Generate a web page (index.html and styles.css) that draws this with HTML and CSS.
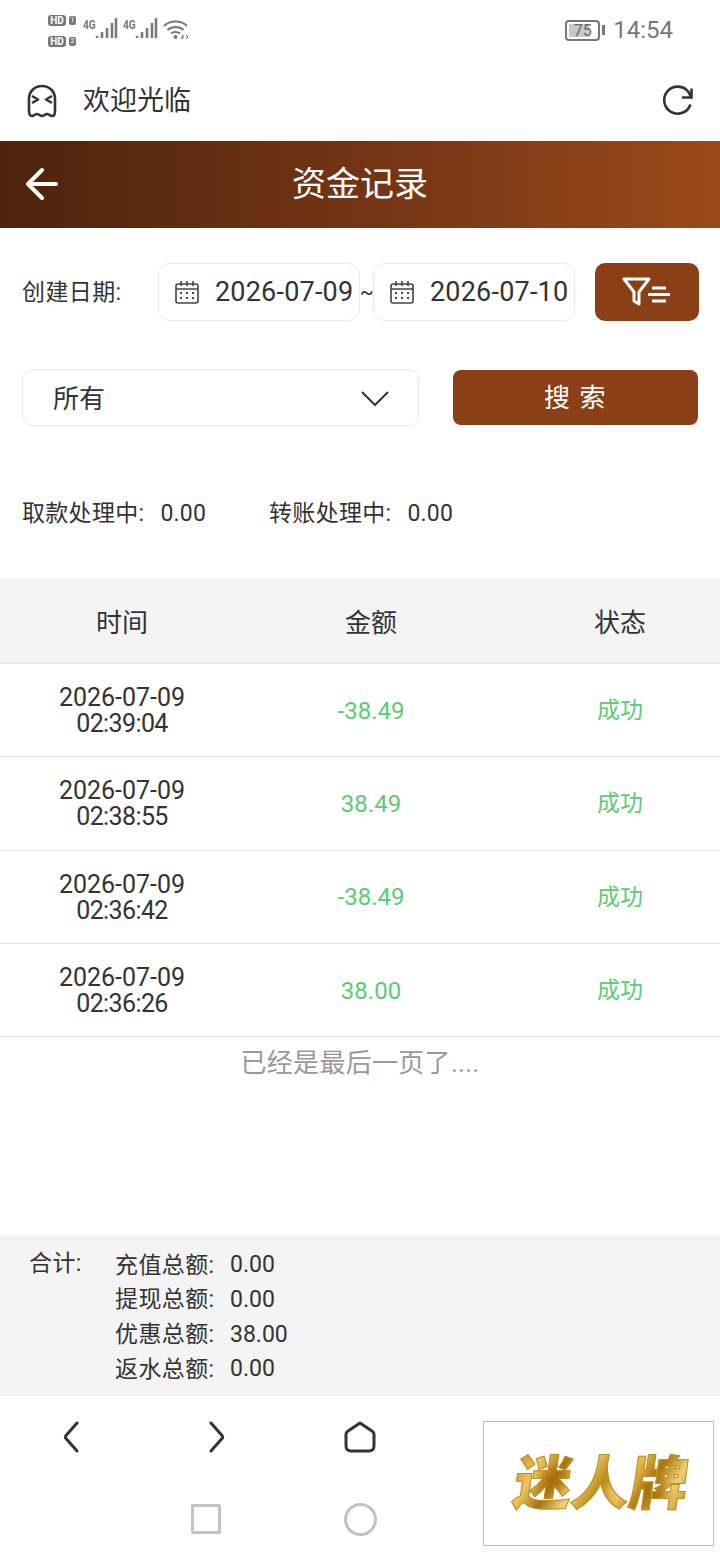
FILE: index.html
```html
<!DOCTYPE html>
<html lang="zh-CN">
<head>
<meta charset="UTF-8">
<meta name="viewport" content="width=device-width, initial-scale=1.0">
<title>资金记录</title>
<link rel="stylesheet" href="styles.css">
</head>
<body>

<div class="status-bar">
    <div class="sims">
        <div class="sim"><span class="hd">HD</span><span class="sim-no">1</span></div>
        <div class="sim"><span class="hd">HD</span><span class="sim-no">2</span></div>
    </div>
    <div class="signal">
        <span class="net">4G</span>
        <svg width="24" height="22" viewBox="0 0 24 22"><path d="M3 19v2M8 15v6M13 11v10M18 6v15M22 1v20" class="bars"/></svg>
    </div>
    <div class="signal">
        <span class="net">4G</span>
        <svg width="24" height="22" viewBox="0 0 24 22"><path d="M3 19v2M8 15v6M13 11v10M18 6v15M22 1v20" class="bars"/></svg>
    </div>
    <svg class="wifi" width="26" height="24" viewBox="0 0 26 24">
        <path d="M1 8C7 2 18 2 24 8M4.500 12C9 8 16 8 20.500 12M8 15.500C10.500 13.500 14.500 13.500 17 15.500"/>
        <circle cx="12.500" cy="19" r="2"/>
        <path class="wifi-arrows" d="M18 21l2-4v4M23 17l2 2-2 2"/>
    </svg>
    <div class="status-right">
        <div class="battery"><span class="battery-level"></span><span class="battery-num">75</span></div>
        <span class="battery-cap"></span>
        <span class="clock">14:54</span>
    </div>
</div>

<div class="top-bar">
    <svg class="ghost" width="32" height="34" viewBox="0 0 32 34">
        <path d="M3 15C3 7 9 2 16 2s13 5 13 13v12c0 3-1 5-3 5-2 0-3-2-5-2s-3 2-5 2-3-2-5-2-3 2-5 2c-2 0-3-2-3-5z"/>
        <path d="M6 12l6 3.500-6 3.500M26 12l-6 3.500 6 3.500"/>
    </svg>
    <span class="welcome">欢迎光临</span>
    <svg class="refresh" width="32" height="32" viewBox="0 0 32 32">
        <path d="M28.500 19.500A13.500 13.500 0 1 1 26.500 7L29 12"/>
        <path d="M29.500 3.500V12.500H20"/>
    </svg>
</div>

<div class="page-head">
    <svg class="back" width="34" height="34" viewBox="0 0 34 34">
        <path d="M31 17H4M17 3L3 17l14 14"/>
    </svg>
    <h1>资金记录</h1>
</div>

<div class="filter-row">
    <span class="filter-label">创建日期:</span>
    <div class="date-box">
        <svg class="cal" width="24" height="24" viewBox="0 0 24 24">
            <rect x="1" y="4" width="22" height="19" rx="2"/>
            <path d="M1 9h22M6 1v5M12 1v5M18 1v5"/>
            <path class="cal-dots" d="M5 13h2M11 13h2M17 13h2M5 18h2M11 18h2M17 18h2"/>
        </svg>
        <span>2026-07-09</span>
    </div>
    <span class="tilde">~</span>
    <div class="date-box">
        <svg class="cal" width="24" height="24" viewBox="0 0 24 24">
            <rect x="1" y="4" width="22" height="19" rx="2"/>
            <path d="M1 9h22M6 1v5M12 1v5M18 1v5"/>
            <path class="cal-dots" d="M5 13h2M11 13h2M17 13h2M5 18h2M11 18h2M17 18h2"/>
        </svg>
        <span>2026-07-10</span>
    </div>
    <div class="filter-btn">
        <svg width="50" height="30" viewBox="0 0 50 30">
            <path class="funnel" d="M2 2h25L17 15v12l-5-3V15z"/>
            <path class="funnel-lines" d="M30 11h14M26 17.500h22M30 24h14"/>
        </svg>
    </div>
</div>

<div class="search-row">
    <div class="select-box">
        <span class="select-text">所有</span>
        <svg width="30" height="18" viewBox="0 0 30 18"><path d="M2 3l13 13L28 3"/></svg>
    </div>
    <div class="search-btn">搜 索</div>
</div>

<div class="pending">
    <span class="pending-item">取款处理中:<b>0.00</b></span>
    <span class="pending-item">转账处理中:<b>0.00</b></span>
</div>

<div class="record-head record-grid">
    <div>时间</div>
    <div>金额</div>
    <div class="col-state">状态</div>
</div>
<div class="record record-grid">
    <div class="rec-time">2026-07-09<br><span class="rec-clock">02:39:04</span></div>
    <div class="rec-green rec-amount">-38.49</div>
    <div class="rec-green rec-state col-state">成功</div>
</div>
<div class="record record-grid">
    <div class="rec-time">2026-07-09<br><span class="rec-clock">02:38:55</span></div>
    <div class="rec-green rec-amount">38.49</div>
    <div class="rec-green rec-state col-state">成功</div>
</div>
<div class="record record-grid">
    <div class="rec-time">2026-07-09<br><span class="rec-clock">02:36:42</span></div>
    <div class="rec-green rec-amount">-38.49</div>
    <div class="rec-green rec-state col-state">成功</div>
</div>
<div class="record record-grid">
    <div class="rec-time">2026-07-09<br><span class="rec-clock">02:36:26</span></div>
    <div class="rec-green rec-amount">38.00</div>
    <div class="rec-green rec-state col-state">成功</div>
</div>
<div class="last-page">已经是最后一页了....</div>

<div class="totals">
    <div class="totals-title">合计:</div>
    <div class="totals-list">
        <div class="total-line"><span>充值总额:</span><span>0.00</span></div>
        <div class="total-line"><span>提现总额:</span><span>0.00</span></div>
        <div class="total-line"><span>优惠总额:</span><span>38.00</span></div>
        <div class="total-line"><span>返水总额:</span><span>0.00</span></div>
    </div>
</div>

<div class="nav">
    <svg class="nav-icon" width="20" height="32" viewBox="0 0 20 32"><path d="M15 2L4 14.500a2 2 0 0 0 0 3L15 30"/></svg>
    <svg class="nav-icon" width="20" height="32" viewBox="0 0 20 32"><path d="M5 2l11 12.500a2 2 0 0 1 0 3L5 30"/></svg>
    <svg class="nav-icon" width="32" height="32" viewBox="0 0 32 32"><path d="M16 2L4 10c-1 .7-2 2-2 3.500V25c0 3 2 5 5 5h18c3 0 5-2 5-5V13.500c0-1.500-1-2.800-2-3.500z"/></svg>
    <span class="nav-spacer"></span>
    <span class="nav-square"></span>
    <span class="nav-circle"></span>
</div>

<div class="brand"><span class="brand-text">迷人牌</span></div>

</body>
</html>
```

FILE: styles.css
```css
* {
    box-sizing: border-box;
}
body {
    margin: 0;
    width: 720px;
    height: 1560px;
    position: relative;
    overflow: hidden;
    background-color: #fff;
    color: #333;
    font-family: Roboto, "Noto Sans CJK SC", sans-serif;
}

/* status bar */
.status-bar {
    height: 60px;
    display: flex;
    align-items: center;
    padding: 0 47px 0 48px;
}
.sims {
    width: 35px;
    display: flex;
    flex-direction: column;
    gap: 10px;
    padding-top: 1px;
}
.sim {
    display: flex;
    align-items: center;
    gap: 3px;
}
.hd {
    width: 18px;
    height: 11px;
    background-color: #777;
    color: #fff;
    border-radius: 3px;
    font-size: 10px;
    font-weight: 700;
    line-height: 11px;
    text-align: center;
}
.sim-no {
    width: 7px;
    height: 9px;
    background-color: #777;
    color: #fff;
    border-radius: 2px;
    font-size: 7px;
    line-height: 9px;
    text-align: center;
}
.signal {
    width: 40px;
    height: 24px;
    position: relative;
    display: flex;
    justify-content: flex-end;
    padding: 0 5px 3px 0;
    align-items: flex-end;
}
.net {
    position: absolute;
    left: 0;
    top: 0;
    font-size: 12px;
    font-weight: 700;
    color: #777;
    transform: scaleX(.85);
    transform-origin: left top;
}
.bars {
    fill: none;
    stroke: #777;
    stroke-width: 2.500;
}
.wifi {
    fill: none;
    stroke: #777;
    stroke-width: 2;
}
.wifi circle {
    fill: #777;
    stroke: none;
}
.wifi-arrows {
    stroke-width: 1;
}
.status-right {
    margin-left: auto;
    display: flex;
    align-items: center;
}
.battery {
    width: 35px;
    height: 21px;
    border: 2px solid #777;
    border-radius: 4px;
    padding: 2px;
    position: relative;
}
.battery-level {
    display: block;
    width: 75%;
    height: 100%;
    background-color: #c9c9c9;
}
.battery-num {
    position: absolute;
    left: 0;
    right: 0;
    top: -1px;
    text-align: center;
    font-size: 16px;
    line-height: 19px;
    color: #666;
}
.battery-cap {
    width: 3px;
    height: 10px;
    margin: 0 8px 0 2px;
    background-color: #777;
}
.clock {
    font-size: 24px;
    color: #777;
}

/* welcome bar */
.top-bar {
    height: 81px;
    display: flex;
    align-items: center;
    padding: 0 26px;
}
.ghost {
    fill: none;
    stroke: #333;
    stroke-width: 2.600;
    stroke-linejoin: round;
}
.welcome {
    margin-left: 25px;
    padding-bottom: 4px;
    font-size: 27px;
}
.refresh {
    margin-left: auto;
    fill: none;
    stroke: #333;
    stroke-width: 2.600;
}

/* page title */
.page-head {
    height: 87px;
    display: flex;
    align-items: center;
    justify-content: center;
    position: relative;
    background: linear-gradient(to right, #4c240c, #733415 50%, #9a4a1a);
}
.page-head h1 {
    margin: 0;
    padding-bottom: 6px;
    font-size: 34px;
    font-weight: 400;
    color: #fff;
}
.back {
    position: absolute;
    left: 25px;
    top: 26px;
    fill: none;
    stroke: #fff;
    stroke-width: 4;
    stroke-linecap: round;
    stroke-linejoin: round;
}

/* filters */
.filter-row {
    margin-top: 35px;
    height: 58px;
    display: flex;
    align-items: center;
    padding-left: 22px;
}
.filter-label {
    width: 136px;
    padding-bottom: 5px;
    font-size: 23px;
    letter-spacing: .4px;
}
.date-box {
    width: 202px;
    height: 58px;
    display: flex;
    align-items: center;
    gap: 16px;
    padding-left: 16px;
    border: 1px solid #eaeaea;
    border-radius: 12px;
    font-size: 27px;
    letter-spacing: .2px;
    white-space: nowrap;
}
.cal {
    flex: none;
    fill: none;
    stroke: #444;
    stroke-width: 1.600;
}
.cal-dots {
    stroke-width: 2;
}
.tilde {
    width: 13px;
    font-size: 20px;
    text-align: center;
}
.filter-btn {
    width: 104px;
    height: 58px;
    margin-left: 20px;
    display: flex;
    align-items: center;
    justify-content: center;
    background-color: #8a3f17;
    border-radius: 10px;
}
.funnel {
    fill: none;
    stroke: #fff;
    stroke-width: 3;
    stroke-linejoin: round;
}
.funnel-lines {
    fill: none;
    stroke: #fff;
    stroke-width: 3;
}

.search-row {
    margin-top: 48px;
    padding: 0 22px;
    height: 57px;
    display: flex;
    align-items: center;
    justify-content: space-between;
}
.select-box {
    width: 397px;
    height: 57px;
    display: flex;
    align-items: center;
    justify-content: space-between;
    padding: 0 28px 0 30px;
    border: 1px solid #eaeaea;
    border-radius: 10px;
    font-size: 26px;
}
.select-text {
    padding-bottom: 3px;
}
.select-box svg {
    fill: none;
    stroke: #333;
    stroke-width: 2;
}
.search-btn {
    width: 245px;
    height: 55px;
    display: flex;
    align-items: center;
    justify-content: center;
    padding-bottom: 4px;
    background-color: #8a3f17;
    border-radius: 8px;
    color: #fff;
    font-size: 26px;
    letter-spacing: 1.500px;
}

.pending {
    margin-top: 68px;
    height: 38px;
    display: flex;
    align-items: center;
    padding: 0 0 4px 22px;
    gap: 63px;
    font-size: 23px;
    letter-spacing: .3px;
}
.pending-item b {
    font-weight: 400;
    margin-left: 16px;
    letter-spacing: .2px;
}

/* record table */
.record-grid {
    display: grid;
    grid-template-columns: 244px 254px 222px;
    align-items: center;
    text-align: center;
}
.col-state {
    padding-left: 22px;
}
.record-head {
    margin-top: 46px;
    height: 86px;
    background-color: #f4f4f4;
    border-bottom: 1px solid #e4e4e4;
    font-size: 26px;
}
.record {
    height: 93.330px;
    border-bottom: 1px solid #e4e4e4;
    font-size: 25px;
}
.rec-time {
    padding-top: 2px;
    line-height: 26px;
}
.rec-clock {
    letter-spacing: -.6px;
}
.rec-green {
    color: #5ccb73;
}
.rec-amount {
    padding-top: 1px;
    font-size: 24px;
}
.rec-state {
    padding-bottom: 4px;
    font-size: 23px;
}
.last-page {
    margin-top: 8px;
    text-align: center;
    font-size: 26px;
    letter-spacing: .3px;
    line-height: 36px;
    color: #999;
}

/* totals */
.totals {
    margin-top: 154px;
    height: 161px;
    display: flex;
    padding: 12px 0 0 29px;
    background-color: #f4f4f4;
    font-size: 23px;
}
.totals-title {
    width: 86px;
    line-height: 34px;
    letter-spacing: .4px;
}
.total-line {
    display: flex;
    height: 34.700px;
    align-items: center;
}
.total-line span:first-child {
    width: 115px;
    padding-bottom: 4px;
    letter-spacing: .4px;
}

/* phone nav */
.nav {
    display: grid;
    grid-template-columns: repeat(3, 144px);
    grid-template-rows: 82px 82px;
    justify-items: center;
    align-items: center;
}
.nav-icon {
    fill: none;
    stroke: #333;
    stroke-width: 3;
    stroke-linecap: round;
    stroke-linejoin: round;
}
.nav-square {
    width: 30px;
    height: 30px;
    margin-right: 20px;
    border: 3px solid #c2c2c2;
    border-radius: 2px;
}
.nav-circle {
    width: 33px;
    height: 33px;
    border: 3px solid #c2c2c2;
    border-radius: 50%;
}

/* floating logo */
.brand {
    position: absolute;
    left: 483px;
    top: 1421px;
    width: 231px;
    height: 125px;
    display: flex;
    align-items: center;
    justify-content: center;
    background-color: #fff;
    border: 1px solid #bdbdbd;
}
.brand-text {
    display: block;
    margin-left: 5px;
    font-size: 58px;
    font-weight: 900;
    line-height: 70px;
    white-space: nowrap;
    transform: skewX(-8deg);
    background:
        radial-gradient(circle at 22% 45%, #a86c08 0, rgba(168, 108, 8, 0) 12%),
        radial-gradient(circle at 62% 55%, #f4dc8c 0, rgba(244, 220, 140, 0) 14%),
        radial-gradient(circle at 82% 65%, #a87008 0, rgba(168, 112, 8, 0) 13%),
        linear-gradient(115deg, #c08a18, #eec65e 14%, #a87210 26%, #f2d57c 38%, #c08a18 50%, #ebbd50 62%, #a8740f 74%, #efcf74 86%, #b8831a);
    -webkit-background-clip: text;
    background-clip: text;
    color: transparent;
    -webkit-text-stroke: 1px #c08f22;
}
```
